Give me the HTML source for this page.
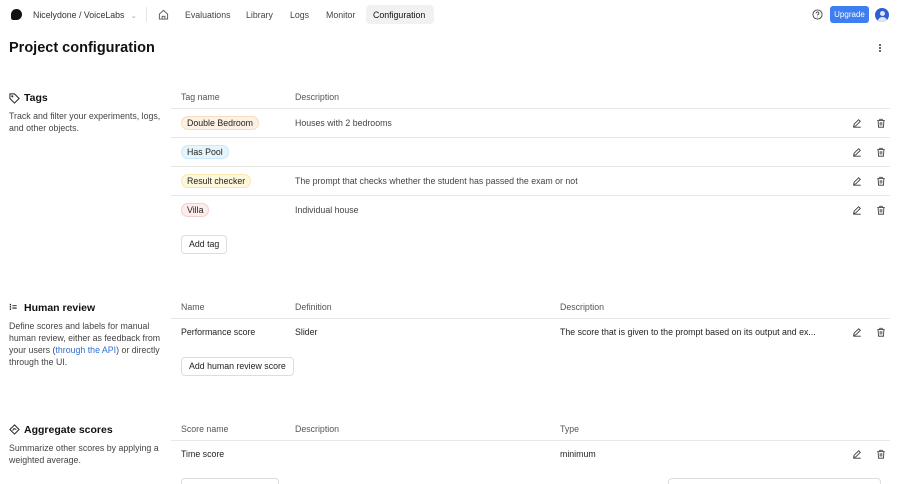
<!DOCTYPE html>
<html><head><style>
*{box-sizing:border-box;margin:0;padding:0}
html,body{width:900px;height:484px;overflow:hidden}
body{background:#fff;font-family:"Liberation Sans",sans-serif;color:#1f1f1f;position:relative;font-size:8.8px}
.a{position:absolute;white-space:nowrap}
.nav{font-size:8.8px;color:#444;top:10px}
.h{font-size:8.8px;color:#555}
.line{position:absolute;left:171px;right:10px;height:1px;background:#e8e8e8}
.pill{position:absolute;left:181px;height:14px;border-radius:8px;padding:0 5px;font-size:8.8px;line-height:13px;border:1px solid}
.btn{position:absolute;height:19px;border:1px solid #ddd;border-radius:4px;font-size:8.8px;line-height:17px;padding:0 7px;color:#222;background:#fff}
.ic{position:absolute;width:10px;height:10px}
.st{font-size:10.5px;font-weight:bold;color:#111}
.desc{font-size:8.8px;color:#444;line-height:12px;white-space:normal;width:160px}
</style></head><body>
<div class="a" style="left:11px;top:9px;width:11px;height:11px;background:#111;border-radius:50% 50% 50% 20%"></div>
<div class="a nav" style="left:33px;color:#333">Nicelydone / VoiceLabs <span style="color:#999;font-size:7px;margin-left:4px">⌄</span></div>
<div class="a" style="left:146px;top:7px;width:1px;height:15px;background:#e5e5e5"></div>
<svg class="a" style="left:158px;top:9px" width="11" height="11" viewBox="0 0 12 12" fill="none" stroke="#555" stroke-width="1"><path d="M1.5 5.5 6 1.5l4.5 4V11h-9z"/><path d="M4.5 11V8h3v3"/></svg>
<div class="a nav" style="left:185px">Evaluations</div>
<div class="a nav" style="left:246px">Library</div>
<div class="a nav" style="left:290px">Logs</div>
<div class="a nav" style="left:326px">Monitor</div>
<div class="a" style="left:366px;top:5px;width:68px;height:19px;background:#f1f1f1;border-radius:4px"></div>
<div class="a nav" style="left:373px;color:#111">Configuration</div>
<svg class="a" style="left:812px;top:9px" width="11" height="11" viewBox="0 0 12 12" fill="none" stroke="#444" stroke-width="1"><circle cx="6" cy="6" r="5"/><path d="M4.5 4.7a1.5 1.5 0 1 1 2 1.4c-.4.2-.5.5-.5.9M6 8.5v.5"/></svg>
<div class="a" style="left:830px;top:6px;width:39px;height:17px;background:#3d7ef0;border-radius:3px;color:#fff;font-size:8px;line-height:17px;text-align:center">Upgrade</div>
<div class="a" style="left:875px;top:8px;width:14px;height:14px;background:#2f5fd0;border-radius:50%;overflow:hidden"><div style="position:absolute;left:4.5px;top:3px;width:5px;height:5px;background:#dfe6f7;border-radius:50%"></div><div style="position:absolute;left:2.5px;top:9px;width:9px;height:8px;background:#dfe6f7;border-radius:50%"></div></div>
<div class="a" style="left:9px;top:40px;font-size:14.5px;font-weight:bold;color:#111">Project configuration</div>
<div class="a" style="left:879px;top:44px;width:2px;height:8px;border-left:2px dotted #666"></div>

<svg class="a" style="left:9px;top:93px" width="11" height="11" viewBox="0 0 12 12" fill="none" stroke="#222" stroke-width="1.1"><path d="M1 1h5l5 5-5 5-5-5z"/><circle cx="3.6" cy="3.6" r=".6"/></svg>
<div class="a st" style="left:24px;top:92px">Tags</div>
<div class="a desc" style="left:9px;top:110px">Track and filter your experiments, logs, and other objects.</div>
<div class="a h" style="left:181px;top:92px">Tag name</div>
<div class="a h" style="left:295px;top:92px">Description</div>
<div class="line" style="top:108px"></div>
<div class="pill" style="top:116px;background:#fdf1e4;border-color:#f5dcc2">Double Bedroom</div>
<div class="a" style="left:295px;top:118px;color:#444">Houses with 2 bedrooms</div>
<div class="line" style="top:137px"></div>
<div class="pill" style="top:145px;background:#e6f5fb;border-color:#c8e9f5">Has Pool</div>
<div class="line" style="top:166px"></div>
<div class="pill" style="top:174px;background:#fdf7dc;border-color:#f5e9b0">Result checker</div>
<div class="a" style="left:295px;top:176px;color:#444">The prompt that checks whether the student has passed the exam or not</div>
<div class="line" style="top:195px"></div>
<div class="pill" style="top:203px;background:#fcecec;border-color:#f3cfcf">Villa</div>
<div class="a" style="left:295px;top:205px;color:#444">Individual house</div>
<div class="btn" style="left:181px;top:235px">Add tag</div>

<div class="a" style="left:9px;top:302px;font-size:9px;font-weight:bold">⁝≡</div>
<div class="a st" style="left:24px;top:302px">Human review</div>
<div class="a desc" style="left:9px;top:320px;width:155px">Define scores and labels for manual human review, either as feedback from your users (<span style="color:#2f6fd6">through the API</span>) or directly through the UI.</div>
<div class="a h" style="left:181px;top:302px">Name</div>
<div class="a h" style="left:295px;top:302px">Definition</div>
<div class="a h" style="left:560px;top:302px">Description</div>
<div class="line" style="top:318px"></div>
<div class="a" style="left:181px;top:327px">Performance score</div>
<div class="a" style="left:295px;top:327px">Slider</div>
<div class="a" style="left:560px;top:327px">The score that is given to the prompt based on its output and ex...</div>
<div class="btn" style="left:181px;top:357px">Add human review score</div>

<svg class="a" style="left:9px;top:424px" width="11" height="11" viewBox="0 0 12 12" fill="none" stroke="#222" stroke-width="1.1"><path d="M6 1 11 6 6 11 1 6z"/><path d="M4 7l1.5-2L8 6"/></svg>
<div class="a st" style="left:24px;top:424px">Aggregate scores</div>
<div class="a desc" style="left:9px;top:442px;width:155px">Summarize other scores by applying a weighted average.</div>
<div class="a h" style="left:181px;top:424px">Score name</div>
<div class="a h" style="left:295px;top:424px">Description</div>
<div class="a h" style="left:560px;top:424px">Type</div>
<div class="line" style="top:440px"></div>
<div class="a" style="left:181px;top:449px">Time score</div>
<div class="a" style="left:560px;top:449px">minimum</div>
<div class="btn" style="left:181px;top:478px;width:98px"></div>
<div class="btn" style="left:668px;top:478px;width:213px"></div>

<svg width="0" height="0" style="position:absolute"><defs>
<symbol id="pen" viewBox="0 0 12 12"><path d="M2 10l.5-2.5L8 2l2 2-5.5 5.5zM1.5 11h9" fill="none" stroke="#333" stroke-width="1"/></symbol>
<symbol id="bin" viewBox="0 0 12 12"><path d="M1.5 3h9M4.5 3V1.5h3V3M2.5 3l.5 8h6l.5-8M5 5v4M7 5v4" fill="none" stroke="#333" stroke-width="1"/></symbol>
</defs></svg>
<svg class="ic" style="left:852px;top:118px"><use href="#pen"/></svg><svg class="ic" style="left:876px;top:118px"><use href="#bin"/></svg>
<svg class="ic" style="left:852px;top:147px"><use href="#pen"/></svg><svg class="ic" style="left:876px;top:147px"><use href="#bin"/></svg>
<svg class="ic" style="left:852px;top:176px"><use href="#pen"/></svg><svg class="ic" style="left:876px;top:176px"><use href="#bin"/></svg>
<svg class="ic" style="left:852px;top:205px"><use href="#pen"/></svg><svg class="ic" style="left:876px;top:205px"><use href="#bin"/></svg>
<svg class="ic" style="left:852px;top:327px"><use href="#pen"/></svg><svg class="ic" style="left:876px;top:327px"><use href="#bin"/></svg>
<svg class="ic" style="left:852px;top:449px"><use href="#pen"/></svg><svg class="ic" style="left:876px;top:449px"><use href="#bin"/></svg>
</body></html>
